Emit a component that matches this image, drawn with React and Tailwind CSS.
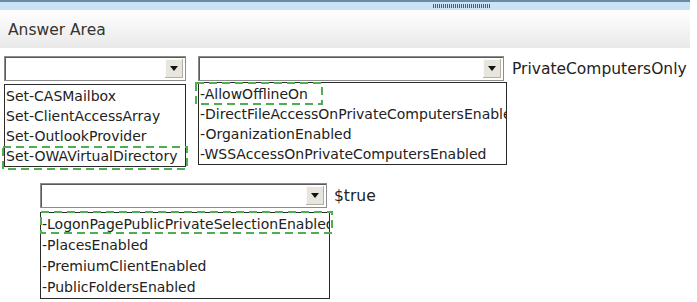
import React from 'react';

const font = { fontFamily: '"DejaVu Sans", Verdana, sans-serif' };

function Select({ width }) {
  return (
    <div
      className="flex h-[25px] border border-[#8c8c8c] bg-white shadow-[inset_1px_1px_0_#5a5a5a]"
      style={{ width }}
    >
      <div className="flex-1" />
      <div className="m-[2px] ml-0 flex w-[18px] items-center justify-center bg-[#e8e6dc] shadow-[inset_-1px_-1px_0_#b3b0a4,inset_1px_1px_0_#fbfaf6]">
        <svg width="8" height="5" viewBox="0 0 8 5">
          <path d="M0 0h8L4 5z" fill="#111" />
        </svg>
      </div>
    </div>
  );
}

// dashed green marker drawn over the chosen option
function PickMark({ box }) {
  const { left, top, width, height } = box;
  return (
    <svg
      className="pointer-events-none absolute"
      style={{ left, top }}
      width={width}
      height={height}
    >
      <rect
        x="1"
        y="1"
        width={width - 2}
        height={height - 2}
        fill="none"
        stroke="#4fae4f"
        strokeWidth="2"
        strokeDasharray="8 5"
      />
    </svg>
  );
}

function Options({ items, width, rowH, pickBox }) {
  return (
    <div className="relative border border-[#2b2b2b] bg-white" style={{ width }}>
      <ul className="overflow-hidden pl-[1px] pt-[1px] text-[14px] text-[#222]" style={font}>
        {items.map((t) => (
          <li key={t} className="whitespace-nowrap" style={{ height: rowH, lineHeight: `${rowH}px` }}>
            {t}
          </li>
        ))}
      </ul>
      {pickBox && <PickMark box={pickBox} />}
    </div>
  );
}

export default function App() {
  return (
    <div className="h-[302px] w-[697px] overflow-hidden bg-white" style={font}>
      <div className="relative h-[10px] w-[690px] border-t-2 border-[#6c8aa3] bg-[#c9e2f6]">
        <div className="absolute left-[433px] top-[2px] h-[4px] w-[57px] bg-[repeating-linear-gradient(90deg,#3c5f86_0_1px,transparent_1px_2px)]" />
      </div>
      <div className="flex h-[38px] w-[690px] items-center bg-gradient-to-b from-white to-[#e9e9e9] pl-[8px] pt-[3px] text-[15.5px] text-[#333]">
        Answer Area
      </div>

      <div className="mt-[8px] flex items-start">
        <div className="ml-[4px] flex flex-col gap-[3px]">
          <Select width={182} />
          <Options
            width={182}
            rowH={20}
            items={['Set-CASMailbox', 'Set-ClientAccessArray', 'Set-OutlookProvider', 'Set-OWAVirtualDirectory']}
            pickBox={{ left: -3, top: 61, width: 186, height: 24 }}
          />
        </div>
        <div className="ml-[12px] flex flex-col gap-[1px]">
          <Select width={306} />
          <Options
            width={309}
            rowH={20}
            items={[
              '-AllowOfflineOn',
              '-DirectFileAccessOnPrivateComputersEnabled',
              '-OrganizationEnabled',
              '-WSSAccessOnPrivateComputersEnabled',
            ]}
            pickBox={{ left: -4, top: -1, width: 128, height: 23 }}
          />
        </div>
        <div className="flex h-[27px] items-center pl-[5px] text-[15.5px] text-[#222]">
          PrivateComputersOnly
        </div>
      </div>

      <div className="ml-[40px] mt-[16px] flex items-start">
        <div className="flex flex-col gap-[4px]">
          <Select width={287} />
          <Options
            width={290}
            rowH={21}
            items={[
              '-LogonPagePublicPrivateSelectionEnabled',
              '-PlacesEnabled',
              '-PremiumClientEnabled',
              '-PublicFoldersEnabled',
            ]}
            pickBox={{ left: -1, top: -2, width: 293, height: 23 }}
          />
        </div>
        <div className="flex h-[27px] items-center pl-[4px] text-[15.5px] text-[#222]">
          $true
        </div>
      </div>
    </div>
  );
}
